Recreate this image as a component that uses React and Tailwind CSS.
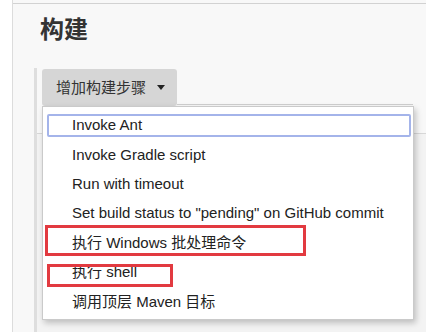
const ITEMS = [
  'Invoke Ant',
  'Invoke Gradle script',
  'Run with timeout',
  'Set build status to "pending" on GitHub commit',
  '执行 Windows 批处理命令',
  '执行 shell',
  '调用顶层 Maven 目标',
];

export default function App() {
  return (
    <div className="relative w-[426px] h-[332px] overflow-hidden flex bg-[#f8f8f8] text-[#333] font-['Liberation_Sans','Noto_Sans_CJK_SC',sans-serif]">
      {/* left strip */}
      <div className="w-[13px] shrink-0 bg-white border-r border-[#dcdcdc]" />

      <div className="relative flex-1 pt-[3px]">
        <div className="h-full flex flex-col border-t border-[#d2d2d2]">
          <h1 className="pl-[27px] pt-[8px] text-[24px] leading-[32px] font-bold text-[#333] font-['Noto_Sans_CJK_SC',sans-serif]">
            构建
          </h1>

          {/* build steps section */}
          <div className="mt-[24px] ml-[21px] flex-1 flex flex-col border-l-[3px] border-[#dedede]">
            <div className="flex items-end pl-[5px] pt-[1px]">
              <button className="h-[37px] flex items-center pl-[14px] pr-[12px] rounded-[3px] bg-[#d6d6d6] text-[15px] text-[#333] font-['Noto_Sans_CJK_SC',sans-serif]">
                增加构建步骤
                <span className="ml-[11px] w-0 h-0 border-l-[4px] border-r-[4px] border-t-[5px] border-l-transparent border-r-transparent border-t-[#222]" />
              </button>
              <div className="flex-1 mb-[1px] mr-[13px] border-b border-[#cfcfcf]" />
            </div>
            <div className="mt-[27px] flex-1 border-t border-[#d8d8d8] bg-[#f3f3f3]" />
          </div>
        </div>

        {/* dropdown menu */}
        <div className="absolute left-[29px] top-[106px] w-[372px] h-[214px] pt-[7px] flex flex-col gap-[6.4px] bg-white border border-[#cacaca] shadow-[2px_3px_6px_rgba(0,0,0,0.22)]">
          {ITEMS.map((item, i) => (
            <div
              key={item}
              className={`h-[23px] shrink-0 ml-[4px] mr-[2px] flex items-center pl-[23px] text-[15px] text-[#222] whitespace-nowrap ${
                i === 0 ? 'border-2 border-[#a4b4ea] rounded-[2px]' : 'border-2 border-transparent'
              }`}
            >
              {item}
            </div>
          ))}
        </div>
      </div>

      {/* annotation boxes */}
      <div className="absolute left-[45px] top-[225px] w-[261px] h-[31px] border-[3px] border-[#e23a40]" />
      <div className="absolute left-[47px] top-[264px] w-[126px] h-[23px] border-[3px] border-[#e23a40]" />
    </div>
  );
}
